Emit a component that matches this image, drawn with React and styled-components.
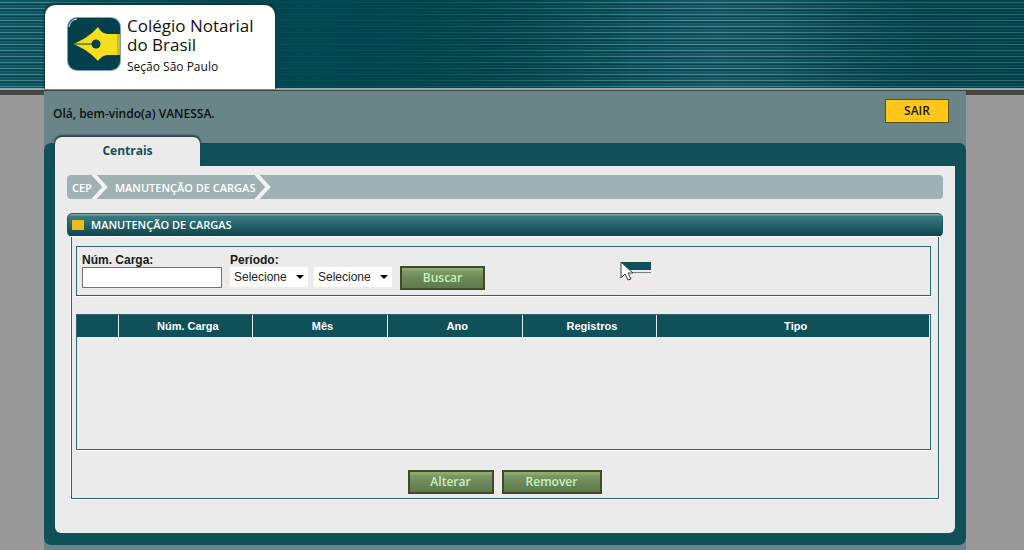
import React from 'react';
import styled, { createGlobalStyle } from 'styled-components';

const teal = '#0f5059';
const panel = '#ebebeb';
const humanist = "'Open Sans', 'Noto Sans', sans-serif";
const arial = "'Liberation Sans', Arial, sans-serif";

const GlobalStyle = createGlobalStyle`
  * { box-sizing: border-box; }
  body { margin: 0; background: #999; font-family: ${arial}; font-size: 12px; }
  #root { overflow: hidden; }
`;

const Header = styled.header`
  display: flex;
  height: 91px;
  padding: 5px 0 0 45px;
  border-bottom: 1px solid #3d4645;
  box-shadow: inset 0 -2px 0 #93abaa, 0 4px 0 #4b4545;
  background:
    linear-gradient(to right, transparent 6%, rgba(0, 72, 80, 0.9) 26%, rgba(0, 68, 77, 0.8) 40%, transparent 62%, transparent 76%, rgba(0, 67, 76, 0.3) 90%),
    repeating-linear-gradient(to bottom, transparent 0 2px, rgba(120, 190, 195, 0.45) 2px 3px, transparent 3px 4px, rgba(0, 30, 45, 0.4) 4px 5px, rgba(90, 160, 165, 0.2) 5px 6px),
    linear-gradient(to right, #0d5860, #00474f 28%, #00454e 48%, #08515a 60%, #175964 70%, #12545c 77%, #04484f 86%, #00434c 92%, #00454e);
`;

const Brand = styled.a`
  display: flex;
  align-items: flex-start;
  gap: 6px;
  width: 230px;
  height: 84px;
  padding: 12px 0 0 21px;
  border-radius: 10px 10px 0 0;
  box-shadow: 0 -1px 2px 1px #12343b;
  background: #fff;
  color: #111;
  font-family: ${humanist};
  text-decoration: none;
`;

const BrandText = styled.span`
  display: flex;
  flex-direction: column;
  margin-top: -1px;
  font-size: 17px;
  line-height: 19px;
  white-space: nowrap;
`;

const BrandSection = styled.small`
  margin-top: 4px;
  font-size: 12px;
  line-height: 18px;
`;

const Page = styled.div`
  margin: 0 58px 0 44px;
  padding-bottom: 20px;
  background: #6a8588;
`;

const UserBar = styled.div`
  display: flex;
  justify-content: space-between;
  align-items: flex-start;
  height: 52px;
  padding: 8px 17px 0 9px;
  color: #0b1112;
  font: 600 12px/30px ${humanist};
`;

const LogoutButton = styled.button`
  width: 64px;
  height: 24px;
  padding: 0;
  border: 1px solid #5c5011;
  background: #ffc71a;
  color: #1c1605;
  font: 600 12px/22px ${humanist};
`;

const Frame = styled.main`
  display: flow-root;
  padding: 0 11px 12px;
  border-radius: 7px;
  background: ${teal};
`;

const Tabs = styled.nav`
  display: flex;
  height: 29px;
  margin-top: -6px;
`;

const Tab = styled.a`
  width: 145px;
  border-radius: 7px 7px 0 0;
  box-shadow: 0 -1px 2px 1px #2b4348;
  background: ${panel};
  color: ${teal};
  font: 700 12px/28px ${humanist};
  text-align: center;
  text-decoration: none;
`;

const Content = styled.div`
  position: relative;
  padding: 9px 12px 34px;
  border-radius: 0 0 6px 6px;
  background: ${panel};
`;

const Crumbs = styled.nav`
  display: flex;
  height: 24px;
  border-radius: 4px;
  overflow: hidden;
  background: #a0b1b4;
`;

const Crumb = styled.a`
  padding-left: 5px;
  color: #fff;
  font: 600 11px/26px ${humanist};
  text-decoration: none;
  white-space: nowrap;
`;

const Chevron = styled.svg`
  width: 18px;
  height: 24px;
`;

const SectionTitle = styled.h1`
  display: flex;
  align-items: center;
  gap: 7px;
  height: 24px;
  margin: 14px 0 0;
  padding: 0 4px;
  border: 1px solid #1e5a61;
  border-radius: 5px;
  background: linear-gradient(#78a5a8 0 1px, #3e7b80 2px, #2d6c73 8px, #145059 18px, #0e434c);
  color: #fff;
  font: 600 11px/22px ${humanist};
`;

const Marker = styled.span`
  width: 12px;
  height: 10px;
  background: #efb91a;
`;

const Section = styled.section`
  margin: 0 4px;
  padding: 9px 7px 4px 4px;
  border: 1px solid #2c666c;
  border-top: 0;
  box-shadow: 0 0 0 1px #fafafa;
`;

const Filters = styled.form`
  display: flex;
  align-items: flex-end;
  height: 50px;
  padding: 0 5px 5px;
  border: 1px solid #2c666c;
  box-shadow: 0 1px 0 #fff;
`;

const Field = styled.div`
  display: flex;
  flex-direction: column;
  margin-right: 8px;
  padding-bottom: 2px;
`;

const Label = styled.label`
  color: #16191b;
  font: 700 12px/14px ${arial};
`;

const TextInput = styled.input`
  width: 140px;
  height: 21px;
  padding: 1px 3px;
  border: 1px solid #747474;
  background: #fff;
  font: 13px ${arial};
`;

const SelectRow = styled.div`
  display: flex;
  gap: 6px;
  height: 21px;
`;

const SelectBox = styled.select`
  appearance: none;
  width: 78px;
  height: 20px;
  padding: 0 4px;
  border: 0;
  border-radius: 0;
  background: url("data:image/svg+xml,%3Csvg xmlns='http://www.w3.org/2000/svg' width='8' height='4'%3E%3Cpath d='M0 0h8L4 4z'/%3E%3C/svg%3E") right 4px center no-repeat, #fff;
  color: #222;
  font: 12px/20px ${arial};
`;

const ActionButton = styled.button`
  width: ${(p) => p.$width}px;
  height: 24px;
  padding: 0;
  border: 2px solid #3b4c27;
  background: linear-gradient(#8fab74 0 2px, #7d9c66 3px, #6d8958 10px, #5f7a4c);
  color: #c8f3bd;
  font: 600 12px/20px ${humanist};
`;

const GridBox = styled.div`
  height: 136px;
  margin-top: 18px;
  border: 1px solid #2c666c;
  box-shadow: 0 1px 0 #fff;
`;

const Grid = styled.table`
  width: 100%;
  border-collapse: collapse;
  table-layout: fixed;
`;

const HeadCell = styled.th`
  width: ${(p) => p.$width};
  height: 22px;
  padding: 0 0 0 5px;
  border-right: 1px solid #e3eeee;
  background: ${teal};
  color: #fff;
  font: 700 11px/22px ${arial};
`;

const Actions = styled.div`
  display: flex;
  justify-content: center;
  gap: 8px;
  margin-top: 20px;
  padding-left: 2px;
`;

const Busy = styled.svg`
  position: absolute;
  left: 565px;
  top: 95px;
  width: 34px;
  height: 32px;
`;

function Separator() {
  return (
    <Chevron viewBox="0 0 18 24" aria-hidden="true">
      <path d="M1 -1 L13 12 L1 25" fill="none" stroke="#f2f3f3" strokeWidth="4" />
    </Chevron>
  );
}

function PenLogo() {
  return (
    <svg width="55" height="54" viewBox="0 0 55 54" aria-hidden="true">
      <rect x="1" width="54" height="54" rx="10" fill="#7fa5b0" />
      <rect x="2" y="1" width="52" height="52" rx="9" fill="#04404c" />
      <path d="M3 10 Q4 3 11 2" fill="none" stroke="#e6f0f2" strokeWidth="1" />
      <path d="M7 27 C17 23 25 18 32 10 C35 15 38 17 43 17 H54 V38 H43 C38 38 35 40 32 44 C25 36 17 31 7 27Z" fill="#f5df1d" />
      <path d="M51 17h3v21h-3z" fill="#d0b42b" />
      <path d="M7 27H27" stroke="#04404c" strokeWidth="1" />
      <circle cx="30" cy="27" r="4.500" fill="#04404c" />
    </svg>
  );
}

const columns = [
  ['', '41px'],
  ['Núm. Carga', '15.8%'],
  ['Mês', '15.8%'],
  ['Ano', '15.8%'],
  ['Registros', '15.8%'],
  ['Tipo', 'auto'],
];

export default function App() {
  return (
    <>
      <GlobalStyle />
      <Header>
        <Brand href="#">
          <PenLogo />
          <BrandText>
            <span>Colégio Notarial</span>
            <span>do Brasil</span>
            <BrandSection>Seção São Paulo</BrandSection>
          </BrandText>
        </Brand>
      </Header>
      <Page>
        <UserBar>
          <span>Olá, bem-vindo(a) VANESSA.</span>
          <LogoutButton type="button">SAIR</LogoutButton>
        </UserBar>
        <Frame>
          <Tabs><Tab href="#">Centrais</Tab></Tabs>
          <Content>
            <Crumbs aria-label="Localização">
              <Crumb href="#">CEP</Crumb>
              <Separator />
              <Crumb href="#">MANUTENÇÃO DE CARGAS</Crumb>
              <Separator />
            </Crumbs>
            <SectionTitle><Marker />MANUTENÇÃO DE CARGAS</SectionTitle>
            <Section>
              <Filters onSubmit={(e) => e.preventDefault()}>
                <Field>
                  <Label htmlFor="carga">Núm. Carga:</Label>
                  <TextInput id="carga" />
                </Field>
                <Field>
                  <Label htmlFor="mes">Período:</Label>
                  <SelectRow>
                    <SelectBox id="mes"><option>Selecione</option></SelectBox>
                    <SelectBox aria-label="Ano"><option>Selecione</option></SelectBox>
                  </SelectRow>
                </Field>
                <ActionButton $width={85}>Buscar</ActionButton>
              </Filters>
              <GridBox>
                <Grid>
                  <thead>
                    <tr>
                      {columns.map(([name, width]) => (
                        <HeadCell key={name} $width={width} scope="col">{name}</HeadCell>
                      ))}
                    </tr>
                  </thead>
                </Grid>
              </GridBox>
              <Actions>
                <ActionButton type="button" $width={86}>Alterar</ActionButton>
                <ActionButton type="button" $width={100}>Remover</ActionButton>
              </Actions>
            </Section>
            <Busy viewBox="0 0 34 32" aria-hidden="true">
              <rect x="1" y="13" width="30" height="17" fill="#efebea" />
              <path d="M1 1h30v8H1z" fill={teal} />
              <path d="M10 11.500h21" stroke="#777f81" />
              <path d="M1 1v16l4-4 3 6 3-1-3-6h5z" fill="#fff" stroke="#333b3d" />
            </Busy>
          </Content>
        </Frame>
      </Page>
    </>
  );
}
